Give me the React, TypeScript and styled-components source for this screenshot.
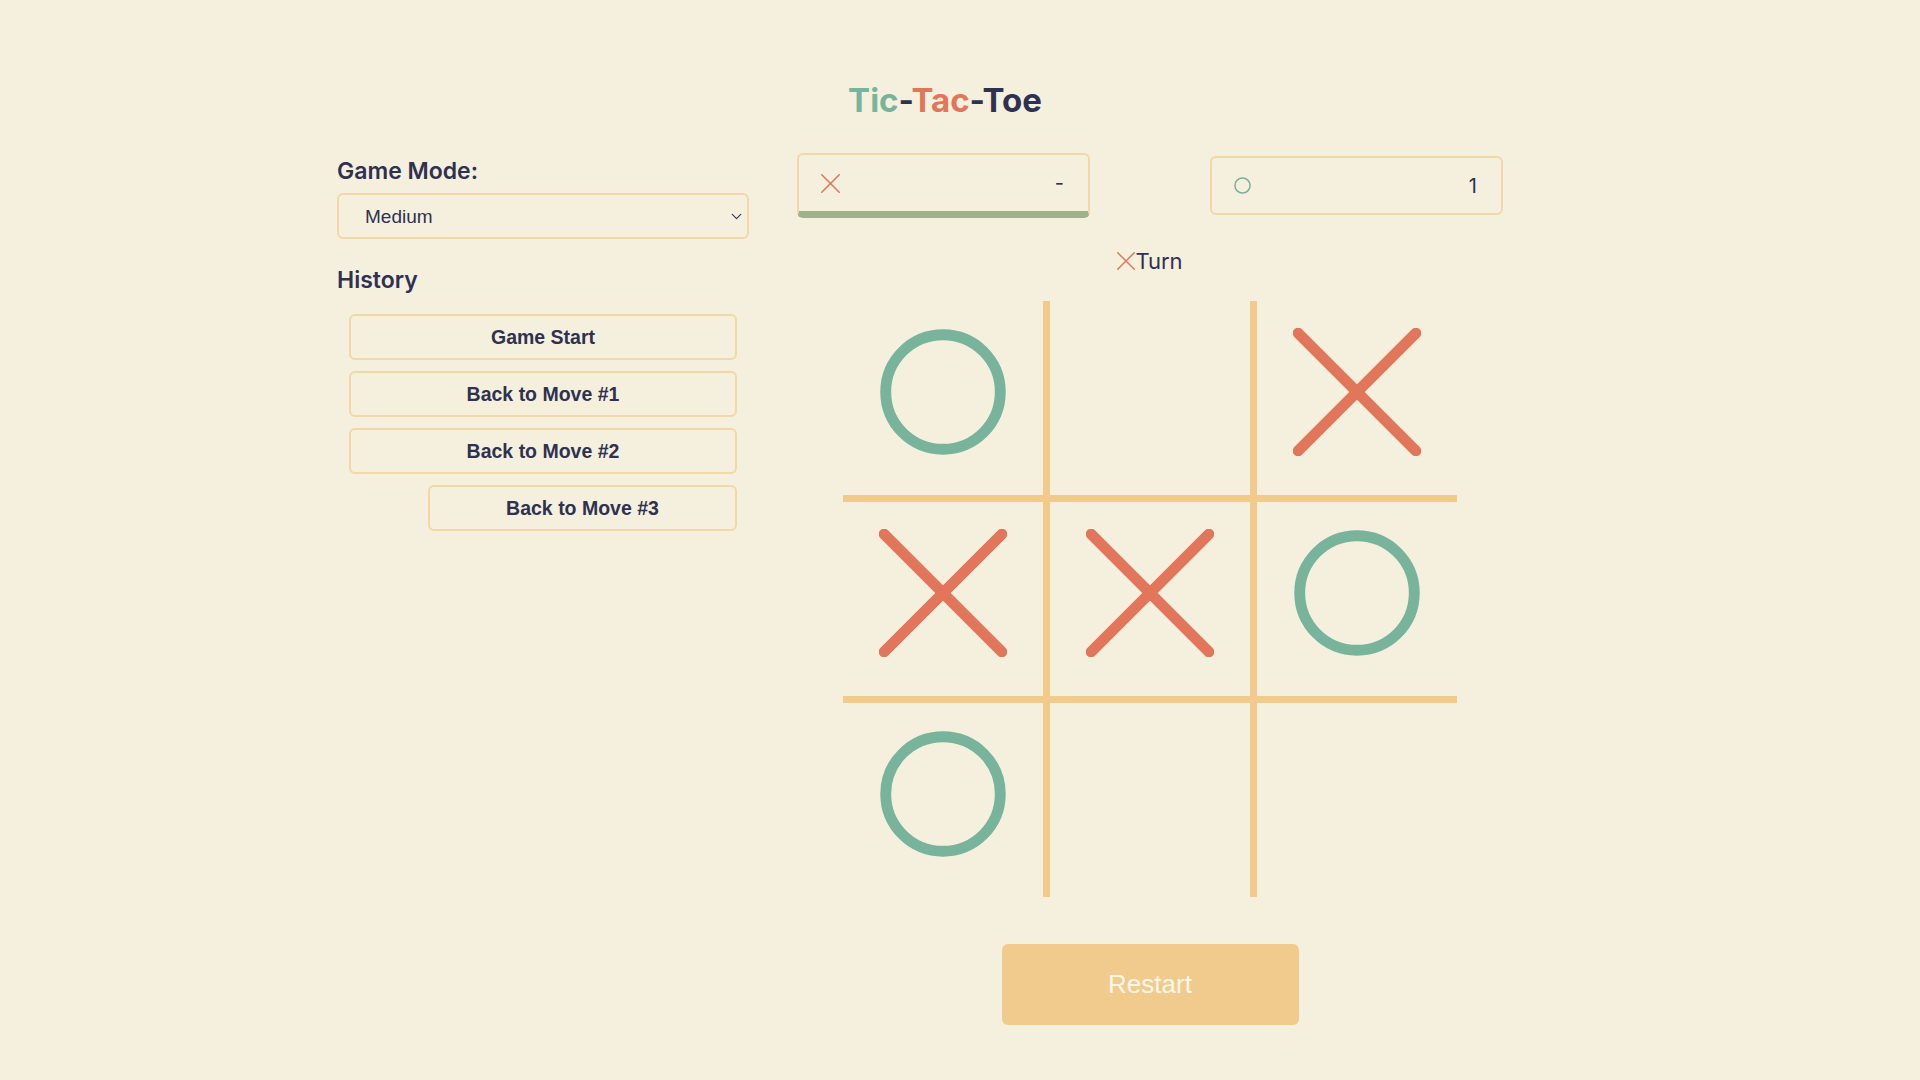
import React from 'react'
import styled, { createGlobalStyle } from 'styled-components'
import { ChevronDown } from 'lucide-react'

const palette = {
  bg: '#f5f0de',
  text: '#2f3150',
  green: '#78b39b',
  orange: '#e1765a',
  line: '#f2ca8c',
  border: '#f1d8a6',
  bar: '#9fb18c',
  restart: '#f1cb8d',
}

type Mark = 'X' | 'O' | null

const board: Mark[] = ['O', null, 'X', 'X', 'X', 'O', 'O', null, null]

const history = ['Game Start', 'Back to Move #1', 'Back to Move #2', 'Back to Move #3']

const GlobalStyle = createGlobalStyle`
  * {
    box-sizing: border-box;
  }

  body {
    margin: 0;
    background: ${palette.bg};
    color: ${palette.text};
    font-family: Inter, "Liberation Sans", sans-serif;
  }
`

const Page = styled.div`
  min-height: 100vh;
  padding-top: 80px;
`

const Container = styled.div`
  width: 1216px;
  margin-left: 337px;
`

const Title = styled.h1`
  margin: 0 0 33px;
  text-align: center;
  font-size: 33px;
  line-height: 40px;
  font-weight: 700;
  color: ${palette.text};
`

const Word = styled.span<{ $color: string }>`
  color: ${p => p.$color};
`

const Main = styled.main`
  display: flex;
  align-items: flex-start;
  gap: 48px;
`

const Sidebar = styled.aside`
  width: 412px;
  display: flex;
  flex-direction: column;
`

const Heading = styled.h2`
  margin: 0;
  font-size: 23px;
  line-height: 28px;
  font-weight: 600;
`

const ModeHeading = styled(Heading)`
  margin-top: 4px;
  margin-bottom: 8px;
`

const HistoryHeading = styled(Heading)`
  margin-top: 27px;
  margin-bottom: 20px;
`

const SelectWrap = styled.div`
  position: relative;
  height: 46px;
`

const Select = styled.select`
  appearance: none;
  width: 100%;
  height: 100%;
  padding: 0 26px;
  border: 2px solid ${palette.border};
  border-radius: 6px;
  background: transparent;
  color: ${palette.text};
  font-family: "Liberation Sans", Arial, sans-serif;
  font-size: 19px;
`

const Chevron = styled(ChevronDown)`
  position: absolute;
  right: 4px;
  top: 15px;
  pointer-events: none;
  color: ${palette.text};
`

const HistoryList = styled.ol`
  list-style: none;
  margin: 0;
  padding: 0 12px;
  display: flex;
  flex-direction: column;
  gap: 11px;
`

const HistoryItem = styled.li<{ $indent: number }>`
  padding-left: ${p => p.$indent}px;
`

const HistoryButton = styled.button`
  width: 100%;
  height: 46px;
  border: 2px solid ${palette.border};
  border-radius: 6px;
  background: transparent;
  color: ${palette.text};
  font-family: "Liberation Sans", Arial, sans-serif;
  font-size: 19.5px;
  font-weight: 700;
`

const GameColumn = styled.section`
  width: 706px;
  display: flex;
  flex-direction: column;
  align-items: center;
`

const Scores = styled.div`
  display: flex;
  align-items: center;
  gap: 120px;
`

const ScoreBox = styled.div<{ $active?: boolean }>`
  width: 293px;
  height: ${p => (p.$active ? 65 : 59)}px;
  display: flex;
  align-items: center;
  justify-content: space-between;
  padding: 0 24px 0 22px;
  border: 2px solid ${palette.border};
  border-bottom: ${p => (p.$active ? `7px solid ${palette.bar}` : `2px solid ${palette.border}`)};
  border-radius: 6px;
  font-size: 20px;
  color: ${palette.text};
`

const Turn = styled.div`
  margin-top: 29px;
  display: flex;
  align-items: center;
  font-size: 22px;
  line-height: 28px;
`

const Grid = styled.div`
  margin-top: 26px;
  display: grid;
  grid-template-columns: repeat(3, 200px);
  grid-template-rows: repeat(3, 194px);
  gap: 7px;
  background: ${palette.line};
`

const Cell = styled.div`
  display: flex;
  align-items: center;
  justify-content: center;
  padding-bottom: 12px;
  background: ${palette.bg};
`

const RestartButton = styled.button`
  margin-top: 47px;
  width: 297px;
  height: 81px;
  border: none;
  border-radius: 6px;
  background: ${palette.restart};
  color: #fdf7e8;
  font-family: "Liberation Sans", Arial, sans-serif;
  font-size: 26px;
`

const XMark: React.FC<{ size: number; stroke: number }> = ({ size, stroke }) => (
  <svg width={size} height={size} viewBox="0 0 100 100">
    <g stroke={palette.orange} strokeWidth={stroke} strokeLinecap="round">
      <line x1="4" y1="4" x2="96" y2="96" />
      <line x1="96" y1="4" x2="4" y2="96" />
    </g>
  </svg>
)

const OMark: React.FC<{ size: number; stroke: number }> = ({ size, stroke }) => (
  <svg width={size} height={size} viewBox="0 0 100 100">
    <circle cx="50" cy="50" r={50 - stroke / 2 - 1} fill="none" stroke={palette.green} strokeWidth={stroke} />
  </svg>
)

const App: React.FC = () => (
  <Page>
    <GlobalStyle />
    <Container>
      <Title>
        <Word $color={palette.green}>Tic</Word>-<Word $color={palette.orange}>Tac</Word>-Toe
      </Title>
      <Main>
        <Sidebar>
          <ModeHeading>Game Mode:</ModeHeading>
          <SelectWrap>
            <Select defaultValue="medium">
              <option value="easy">Easy</option>
              <option value="medium">Medium</option>
              <option value="hard">Hard</option>
            </Select>
            <Chevron size={17} strokeWidth={1.6} />
          </SelectWrap>
          <HistoryHeading>History</HistoryHeading>
          <HistoryList>
            {history.map((label, i) => (
              <HistoryItem key={label} $indent={i === 3 ? 79 : 0}>
                <HistoryButton>{label}</HistoryButton>
              </HistoryItem>
            ))}
          </HistoryList>
        </Sidebar>
        <GameColumn>
          <Scores>
            <ScoreBox $active>
              <XMark size={19} stroke={8} />
              <span>-</span>
            </ScoreBox>
            <ScoreBox>
              <OMark size={17} stroke={9} />
              <span>1</span>
            </ScoreBox>
          </Scores>
          <Turn>
            <XMark size={18} stroke={8} />
            Turn
          </Turn>
          <Grid>
            {board.map((mark, i) => (
              <Cell key={i}>
                {mark === 'X' && <XMark size={128} stroke={8.5} />}
                {mark === 'O' && <OMark size={128} stroke={8.5} />}
              </Cell>
            ))}
          </Grid>
          <RestartButton>Restart</RestartButton>
        </GameColumn>
      </Main>
    </Container>
  </Page>
)

export default App
